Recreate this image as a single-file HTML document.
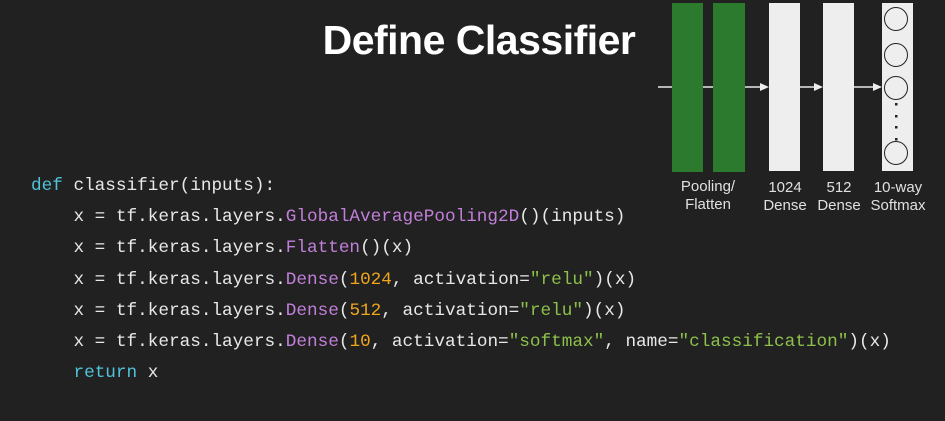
<!DOCTYPE html>
<html><head><meta charset="utf-8"><style>
body{margin:0;width:945px;height:421px;background:#212121;overflow:hidden;position:relative;font-family:"Liberation Sans",sans-serif}
h1{position:absolute;left:0;width:958px;text-align:center;top:17px;margin:0;font-size:41px;font-weight:bold;color:#fff;letter-spacing:-0.5px}
pre{position:absolute;left:31px;top:171px;margin:0;font-family:"Liberation Mono",monospace;font-size:17.7px;line-height:31.2px;color:#e8e8e8}
.k{color:#4fc3d7}.p{color:#c17fd9}.n{color:#f0a61c}.s{color:#8cc04a}
.lbl{position:absolute;color:#e0e0e0;font-size:15px;text-align:center;line-height:18px}
</style></head><body>
<h1>Define Classifier</h1>
<pre><span class="k">def</span> classifier(inputs):
    x = tf.keras.layers.<span class="p">GlobalAveragePooling2D</span>()(inputs)
    x = tf.keras.layers.<span class="p">Flatten</span>()(x)
    x = tf.keras.layers.<span class="p">Dense</span>(<span class="n">1024</span>, activation=<span class="s">"relu"</span>)(x)
    x = tf.keras.layers.<span class="p">Dense</span>(<span class="n">512</span>, activation=<span class="s">"relu"</span>)(x)
    x = tf.keras.layers.<span class="p">Dense</span>(<span class="n">10</span>, activation=<span class="s">"softmax"</span>, name=<span class="s">"classification"</span>)(x)
    <span class="k">return</span> x</pre>
<svg style="position:absolute;left:0;top:0" width="945" height="421">
<g stroke="#e8e8e8" stroke-width="1.5">
<line x1="658" y1="87" x2="762" y2="87"/><line x1="800" y1="87" x2="815" y2="87"/><line x1="854" y1="87" x2="874" y2="87"/>
</g>
<g fill="#eee"><polygon points="760,83 769,87 760,91"/><polygon points="814,83 823,87 814,91"/><polygon points="873,83 882,87 873,91"/></g>
<rect x="672" y="3" width="31" height="169" fill="#2b7a2e"/>
<rect x="713" y="3" width="32" height="169" fill="#2b7a2e"/>
<rect x="769" y="3" width="31" height="168" fill="#eeeeee"/>
<rect x="823" y="3" width="31" height="168" fill="#eeeeee"/>
<rect x="882" y="3" width="31" height="168" fill="#eeeeee"/>
<g fill="none" stroke="#222" stroke-width="1"><circle cx="896" cy="19" r="11.5"/><circle cx="896" cy="55" r="11.5"/><circle cx="896" cy="88" r="11.5"/><circle cx="896" cy="153" r="11.5"/></g>
<g fill="#222"><rect x="895" y="103" width="2.5" height="2.5"/><rect x="895" y="115" width="2.5" height="2.5"/><rect x="895" y="126" width="2.5" height="2.5"/><rect x="895" y="138" width="2.5" height="2.5"/></g>
</svg>
<div class="lbl" style="left:663px;top:178px;width:90px">Pooling/<br>Flatten</div>
<div class="lbl" style="left:755px;top:179px;width:60px">1024<br>Dense</div>
<div class="lbl" style="left:809px;top:179px;width:60px">512<br>Dense</div>
<div class="lbl" style="left:861px;top:179px;width:74px">10-way<br>Softmax</div>
</body></html>
